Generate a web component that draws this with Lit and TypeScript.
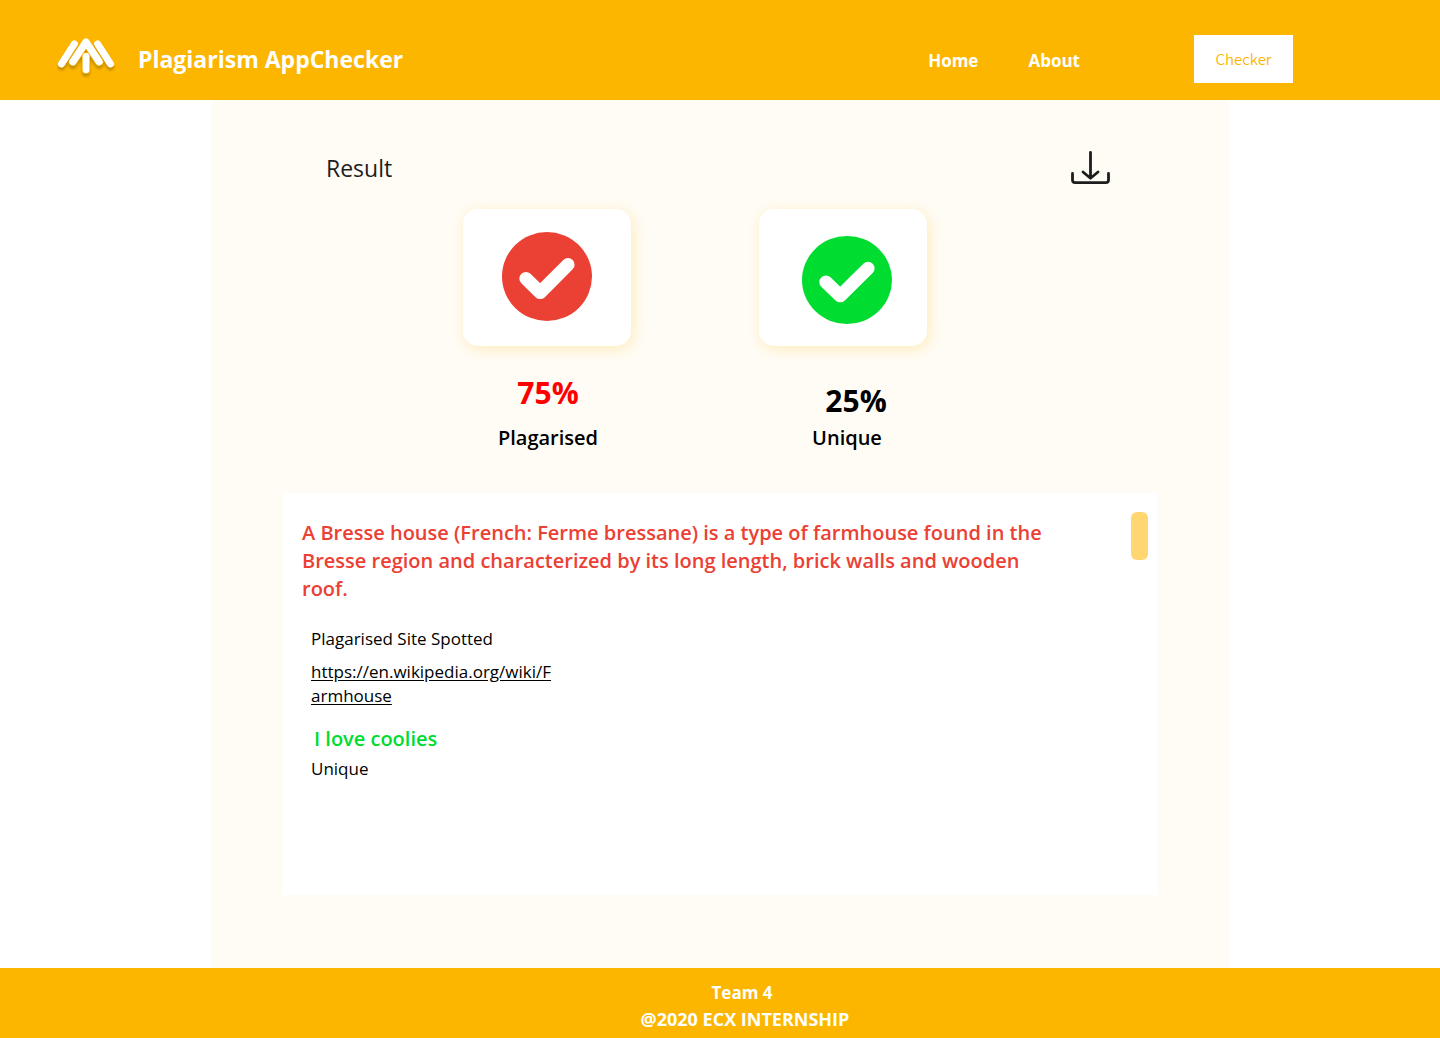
import { LitElement, html, css, svg } from "lit";
import { customElement } from "lit/decorators.js";

const checkMark = (tone: string) => html`
  <svg class="check ${tone}" viewBox="0 0 90 89" preserveAspectRatio="none" aria-hidden="true">
    ${svg`<ellipse cx="45" cy="44.5" rx="45" ry="44.5" fill="currentColor"/>
    <path d="M23.9 46.5 L38.2 60.5 L66 32.7" fill="none" stroke="#fff" stroke-width="13.2" stroke-linecap="round" stroke-linejoin="round"/>`}
  </svg>
`;

@customElement("app-root")
export class AppRoot extends LitElement {
  static styles = css`
    :host {
      display: flex;
      flex-direction: column;
      min-height: 100vh;
      background: #fff;
      color: #000;
      font-family: "Open Sans", "Noto Sans", sans-serif;
      --brand: #fdb600;
    }
    *, *::before, *::after { box-sizing: border-box; }
    h1, h2, p { margin: 0; }

    .header {
      display: flex;
      align-items: center;
      min-height: 100px;
      padding: 18px 147px 0 54px;
      background: var(--brand);
      color: #fff;
    }
    .logo { width: 64px; height: 48px; margin-right: 20px; }
    .name { flex: 1; font-size: 23px; line-height: 32px; font-weight: 700; }
    .nav { display: flex; gap: 50px; margin-right: 114px; padding-top: 4px; }
    .nav a { color: #fff; text-decoration: none; font-size: 17px; line-height: 24px; font-weight: 700; }
    .checker {
      width: 99px;
      height: 48px;
      padding: 0 0 2px;
      border: 0;
      background: #fff;
      color: var(--brand);
      font: 350 15px "Noto Sans CJK JP", sans-serif;
    }

    .main {
      flex: 1;
      width: 100%;
      max-width: 1018px;
      margin: 0 auto;
      padding: 44px 72px 72px;
      background: #fffcf5;
    }
    .bar { display: flex; justify-content: space-between; padding: 0 43px; }
    .bar h1 { font-size: 23px; line-height: 48px; font-weight: 400; color: #1d1d1d; }
    .download { width: 47px; height: 48px; padding: 0; border: 0; background: none; }
    .download svg { display: block; width: 47px; height: 48px; }

    .scores { display: flex; justify-content: center; gap: 128px; padding: 17px 50px 0 0; }
    .score { width: 168px; text-align: center; }
    .tile {
      display: flex;
      align-items: center;
      justify-content: center;
      height: 137px;
      border-radius: 15px;
      background: #fff;
      box-shadow: 2px 3px 14px rgba(253, 182, 0, 0.24);
    }
    .check { width: 90px; height: 89px; }
    .check.copied { color: #eb4034; }
    .check.unique { color: #00dc30; }
    .percent { font-size: 30px; line-height: 40px; font-weight: 700; }
    .label { font-size: 20px; line-height: 28px; font-weight: 600; }
    .copied .tile { padding-bottom: 2px; }
    .copied .percent { padding: 27px 0 0 2px; color: #f00; }
    .copied .label { padding: 11px 0 0 2px; }
    .unique .tile { padding: 5px 0 0 8px; }
    .unique .check { height: 88px; }
    .unique .percent { padding: 35px 0 0 26px; }
    .unique .label { padding: 3px 0 0 8px; }

    .report {
      display: flex;
      justify-content: space-between;
      align-items: flex-start;
      min-height: 402px;
      margin-top: 41px;
      padding: 19px 9px 19px 19px;
      background: #fff;
    }
    .text { flex: 1; max-width: 760px; }
    .quote { font-size: 20px; line-height: 28px; font-weight: 600; color: #eb4034; padding-top: 7px; }
    .detail { padding-left: 9px; font-size: 17px; line-height: 24px; }
    .detail a { display: block; width: 247px; margin-top: 9px; color: inherit; word-break: break-all; text-underline-offset: 2px; }
    .spotted { padding-top: 24px; }
    .quote.own { padding: 17px 0 0 12px; color: #00dc30; }
    .own-note { padding-top: 4px; }
    .thumb { width: 17px; height: 48px; border-radius: 6px; background: #ffd772; }

    .footer {
      min-height: 70px;
      padding: 11px 0 5px 50px;
      background: var(--brand);
      color: #fff;
      text-align: center;
      font-size: 18px;
      line-height: 27px;
      font-weight: 700;
    }
    .team { padding-right: 6px; font-size: 17px; }
  `;

  render() {
    return html`
      <header class="header">
        <svg class="logo" viewBox="0 0 64 48" aria-hidden="true">
          <defs>
            <filter id="shade" filterUnits="userSpaceOnUse" x="0" y="0" width="64" height="48">
              <feDropShadow dx="0" dy="3" stdDeviation="1.8" flood-color="#000" flood-opacity="0.25" />
            </filter>
          </defs>
          <g filter="url(#shade)" fill="none" stroke="#fff" stroke-width="7" stroke-linecap="round" stroke-linejoin="round">
            <path d="M7.5 28.8 L20.4 8.9 M43.6 8.9 L56.5 28.8" />
            <path d="M18.9 26.8 L32 7 L45.1 26.8" stroke="#fdb600" stroke-width="7.8" />
            <path d="M18.9 26.8 L32 7 L45.1 26.8" stroke-width="7.2" />
            <path d="M32 21.3 V34.4" stroke="#fdb600" stroke-width="7.8" />
            <path d="M32 21.3 V34.8" stroke-width="6.8" />
          </g>
        </svg>
        <span class="name">Plagiarism AppChecker</span>
        <nav class="nav">
          <a href="#home">Home</a>
          <a href="#about">About</a>
        </nav>
        <button class="checker" type="button">Checker</button>
      </header>

      <main class="main">
        <div class="bar">
          <h1>Result</h1>
          <button class="download" type="button" aria-label="Download">
            <svg viewBox="0 0 47 48" fill="none" stroke="#1d1d1d" stroke-width="2.8" stroke-linecap="round" stroke-linejoin="round" aria-hidden="true">
              <path d="M23.5 8.5 V34 M16 28 L23.5 34.3 L31 28" />
              <path d="M5.5 29.5 V36 Q5.5 38.7 8.2 38.7 H38.8 Q41.5 38.7 41.5 36 V29.5" />
            </svg>
          </button>
        </div>

        <section class="scores">
          <div class="score copied">
            <div class="tile">${checkMark("copied")}</div>
            <p class="percent">75%</p>
            <p class="label">Plagarised</p>
          </div>
          <div class="score unique">
            <div class="tile">${checkMark("unique")}</div>
            <p class="percent">25%</p>
            <p class="label">Unique</p>
          </div>
        </section>

        <section class="report">
          <div class="text">
            <h2 class="quote">A Bresse house (French: Ferme bressane) is a type of farmhouse found in the Bresse region and characterized by its long length, brick walls and wooden roof.</h2>
            <div class="detail spotted">
              <p>Plagarised Site Spotted</p>
              <a href="https://en.wikipedia.org/wiki/Farmhouse">https://en.wikipedia.org/wiki/Farmhouse</a>
            </div>
            <h2 class="quote own">I love coolies</h2>
            <p class="detail own-note">Unique</p>
          </div>
          <div class="thumb"></div>
        </section>
      </main>

      <footer class="footer">
        <p class="team">Team 4</p>
        <p>@2020 ECX INTERNSHIP</p>
      </footer>
    `;
  }
}
